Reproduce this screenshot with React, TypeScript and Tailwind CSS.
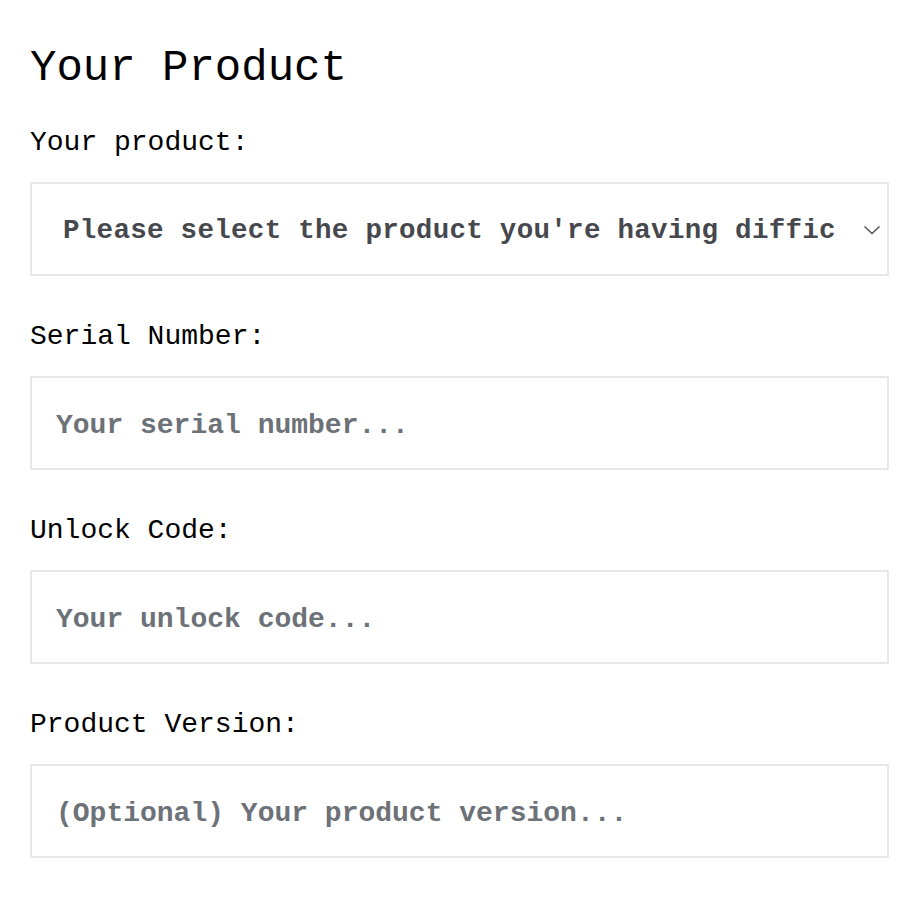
import * as React from "react"

const fields = [
  { label: "Serial Number:", placeholder: "Your serial number..." },
  { label: "Unlock Code:", placeholder: "Your unlock code..." },
  { label: "Product Version:", placeholder: "(Optional) Your product version..." },
]

export default function App() {
  return (
    <div className="min-h-screen bg-white px-[30px] pt-[40px] text-black [font-family:'Liberation_Mono',monospace]">
      <div className="w-[859px]">
        <h1 className="text-[44px] leading-[56px] font-normal">Your Product</h1>

        <label className="mt-[27px] mb-[19px] block text-[28px] leading-[40px]">Your product:</label>
        <div className="flex h-[94px] items-center justify-between border-2 border-[#e8e8e8] pl-[31px] pr-[6px]">
          <span className="whitespace-nowrap pt-[4px] text-[27.5px] tracking-[0.3px] font-bold text-[#46484e]">
            Please select the product you're having diffic
          </span>
          <svg width="18" height="10" viewBox="0 0 18 10" fill="none" className="mt-[2px] shrink-0">
            <path d="M1.5 1.5 L9 8.5 L16.5 1.5" stroke="#555" strokeWidth="1.5" />
          </svg>
        </div>

        {fields.map((f) => (
          <div key={f.label}>
            <label className="mt-[41px] mb-[19px] block text-[28px] leading-[40px]">{f.label}</label>
            <input
              type="text"
              placeholder={f.placeholder}
              className="block h-[94px] w-full border-2 border-[#e8e8e8] bg-white pl-[24px] pt-[4px] text-[28px] font-bold text-[#46484e] outline-none placeholder:text-[#6d7178]"
            />
          </div>
        ))}
      </div>
    </div>
  )
}
